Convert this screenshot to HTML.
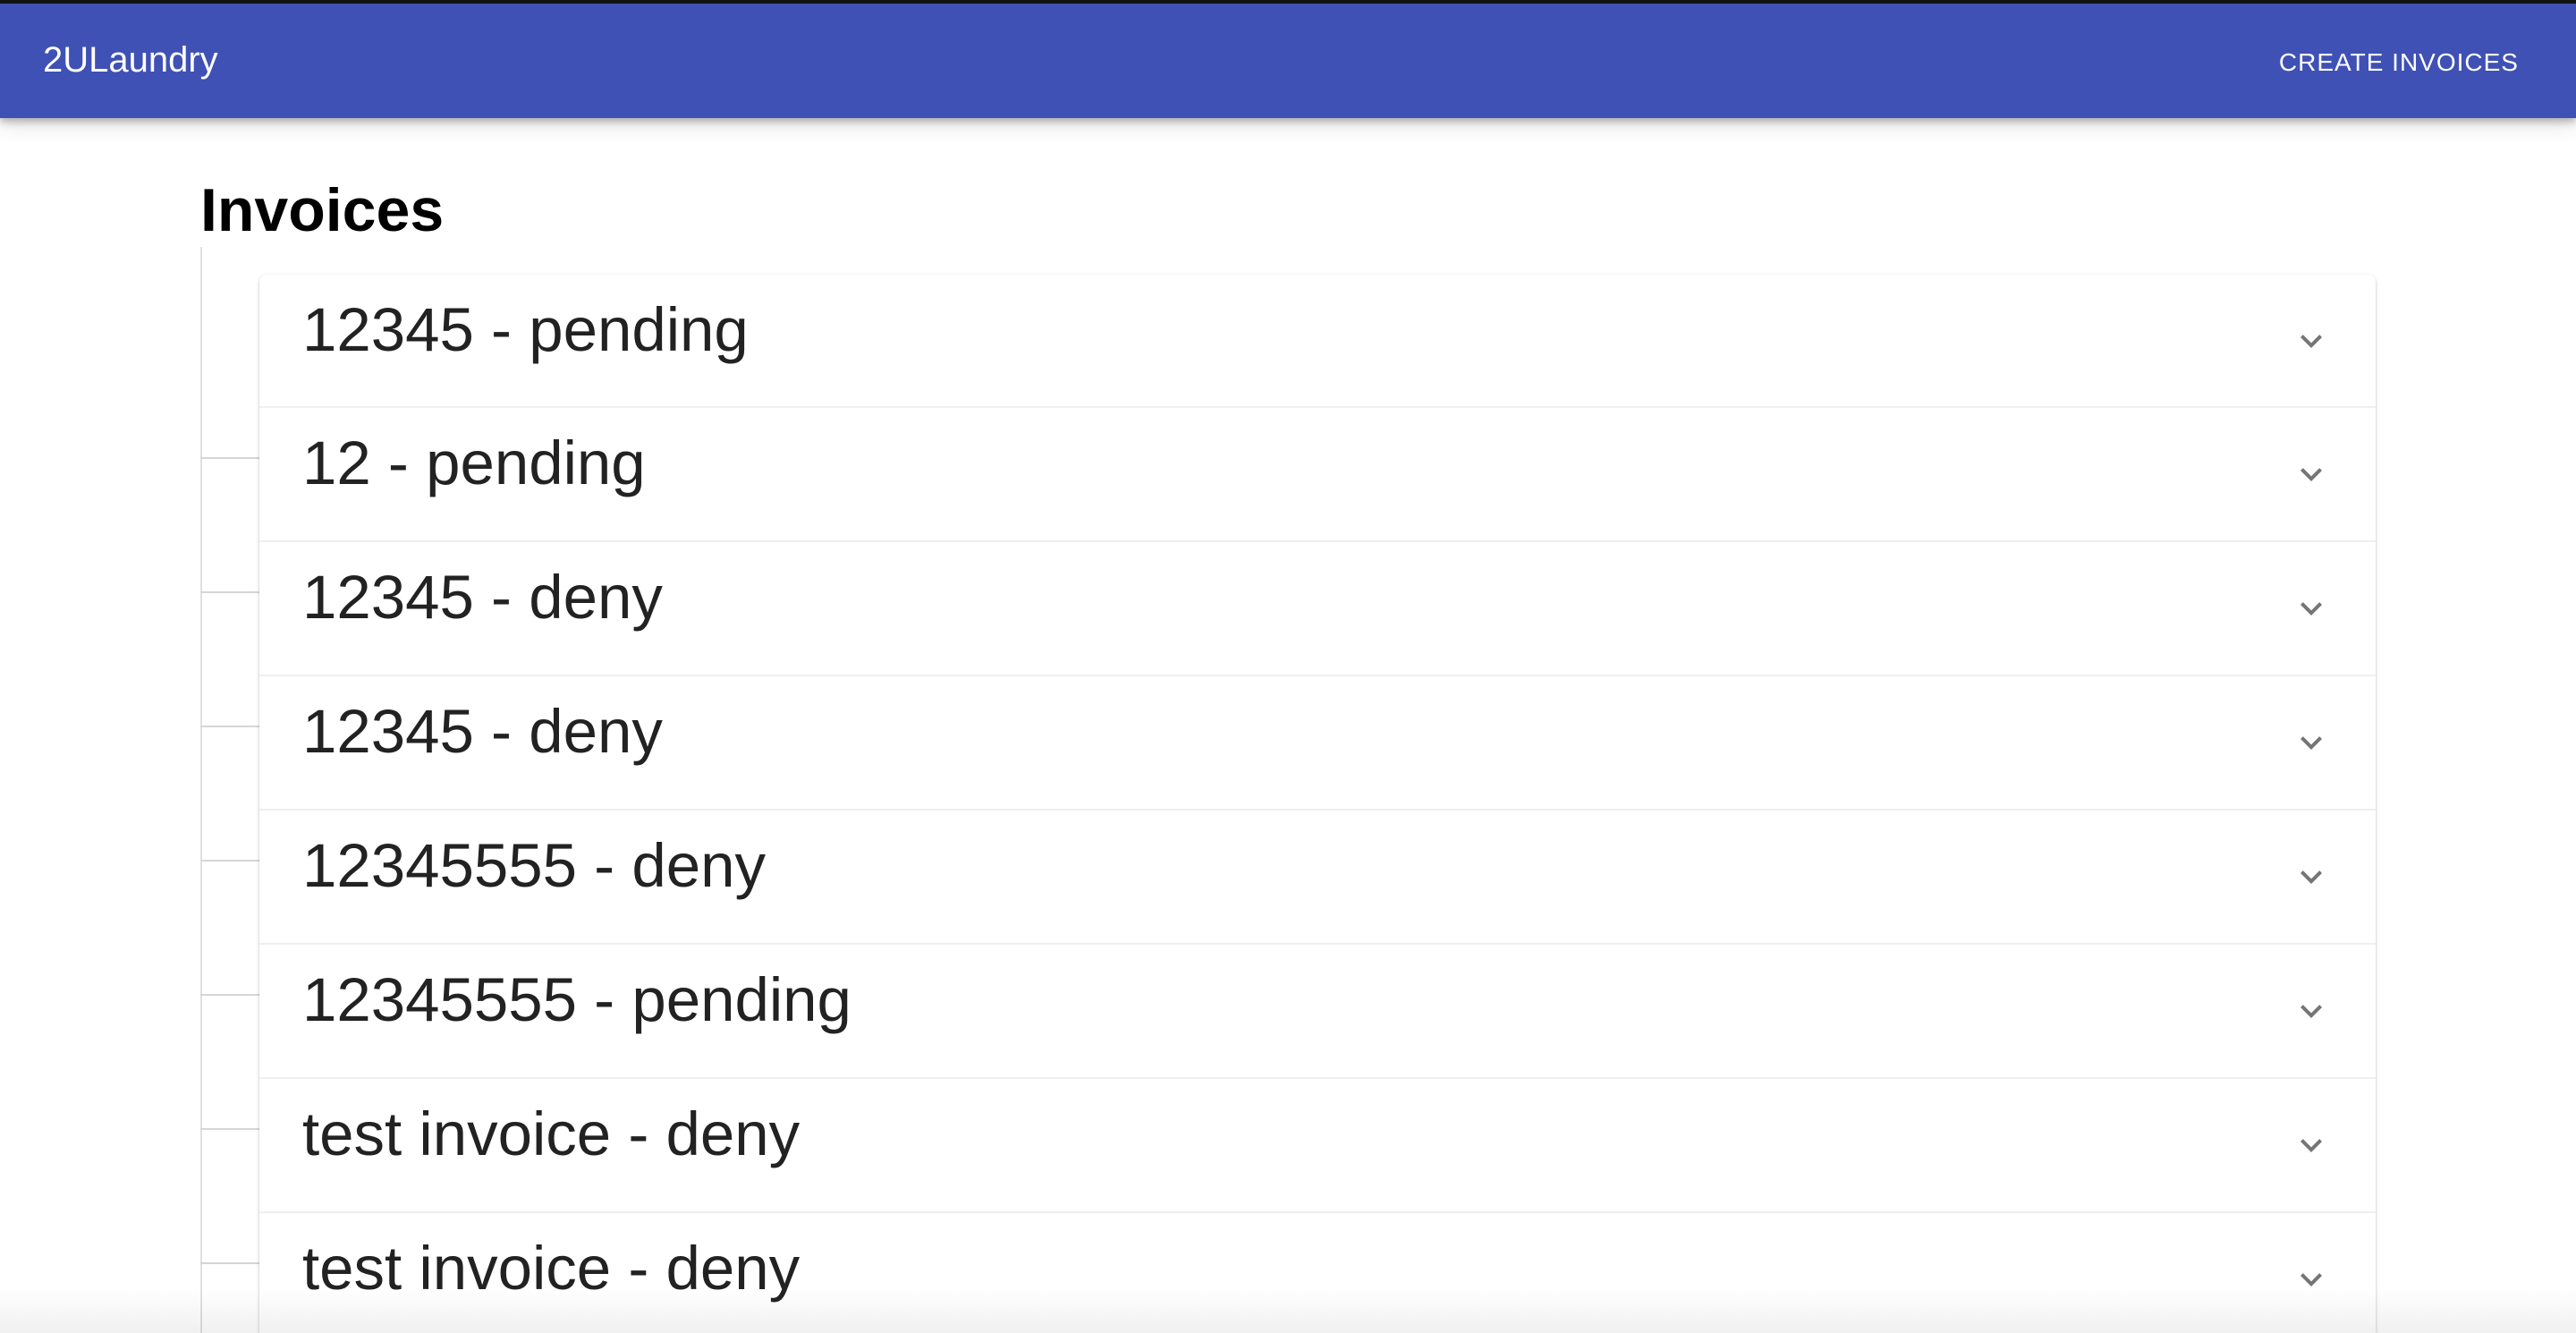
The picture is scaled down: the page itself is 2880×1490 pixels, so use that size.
<!DOCTYPE html>
<html style="width:2880px;height:1490px;overflow:hidden"><head><meta charset="utf-8"><style>
*{margin:0;padding:0;box-sizing:border-box}
body{width:2880px;height:1490px;overflow:hidden;background:#fff;font-family:"Liberation Sans",Arial,sans-serif;position:relative}
.top{position:absolute;left:0;top:0;width:2880px;height:4px;background:#141414}
.bar{position:absolute;left:0;top:4px;width:2880px;height:128px;background:#3f51b5;box-shadow:0 4px 8px rgba(0,0,0,.25),0 8px 20px rgba(0,0,0,.12);z-index:2}
.brand{position:absolute;left:48px;top:37px;color:#fff;font-size:40px;line-height:52px}
.btn{position:absolute;right:64px;top:48px;color:#fff;font-size:28px;letter-spacing:1px;line-height:36px}
h1{position:absolute;left:224px;top:190px;font-size:68px;font-weight:bold;color:#000;line-height:90px}
.vline{position:absolute;left:224px;top:276px;width:2px;height:1214px;background:#e0e0e0}
.tick{position:absolute;left:224px;width:66px;height:2px;background:#d6d6d6}
.card{position:absolute;left:290px;top:307px;width:2366px;height:1183px;overflow:hidden;background:#fff;border-radius:8px 8px 0 0;box-shadow:0 2px 3px rgba(0,0,0,.18),0 1px 6px rgba(0,0,0,.08)}
.row{position:absolute;left:0;width:2366px;height:150px;border-top:2px solid #efefef}
.row span{position:absolute;left:48px;top:22px;font-size:69px;color:#222;line-height:80px}
.row svg{position:absolute;left:2270px;top:50px}
.fade{position:absolute;left:0;top:1440px;width:2880px;height:50px;background:linear-gradient(rgba(0,0,0,0),rgba(0,0,0,.06));z-index:5}
</style></head><body>
<div class="top"></div>
<div class="bar"><div class="brand">2ULaundry</div><div class="btn">CREATE INVOICES</div></div>
<h1>Invoices</h1>
<div class="vline"></div>
<div class="tick" style="top:511px"></div>
<div class="tick" style="top:661px"></div>
<div class="tick" style="top:811px"></div>
<div class="tick" style="top:961px"></div>
<div class="tick" style="top:1111px"></div>
<div class="tick" style="top:1261px"></div>
<div class="tick" style="top:1411px"></div>
<div class="card">
<div class="row" style="top:0;border-top:none"><span style="top:22px">12345 - pending</span><svg width="48" height="48" viewBox="0 0 24 24"><path d="M7.41 8.59 12 13.17l4.59-4.58L18 10l-6 6-6-6z" fill="#757575"/></svg></div>
<div class="row" style="top:147px"><span>12 - pending</span><svg width="48" height="48" viewBox="0 0 24 24"><path d="M7.41 8.59 12 13.17l4.59-4.58L18 10l-6 6-6-6z" fill="#757575"/></svg></div>
<div class="row" style="top:297px"><span>12345 - deny</span><svg width="48" height="48" viewBox="0 0 24 24"><path d="M7.41 8.59 12 13.17l4.59-4.58L18 10l-6 6-6-6z" fill="#757575"/></svg></div>
<div class="row" style="top:447px"><span>12345 - deny</span><svg width="48" height="48" viewBox="0 0 24 24"><path d="M7.41 8.59 12 13.17l4.59-4.58L18 10l-6 6-6-6z" fill="#757575"/></svg></div>
<div class="row" style="top:597px"><span>12345555 - deny</span><svg width="48" height="48" viewBox="0 0 24 24"><path d="M7.41 8.59 12 13.17l4.59-4.58L18 10l-6 6-6-6z" fill="#757575"/></svg></div>
<div class="row" style="top:747px"><span>12345555 - pending</span><svg width="48" height="48" viewBox="0 0 24 24"><path d="M7.41 8.59 12 13.17l4.59-4.58L18 10l-6 6-6-6z" fill="#757575"/></svg></div>
<div class="row" style="top:897px"><span>test invoice - deny</span><svg width="48" height="48" viewBox="0 0 24 24"><path d="M7.41 8.59 12 13.17l4.59-4.58L18 10l-6 6-6-6z" fill="#757575"/></svg></div>
<div class="row" style="top:1047px"><span>test invoice - deny</span><svg width="48" height="48" viewBox="0 0 24 24"><path d="M7.41 8.59 12 13.17l4.59-4.58L18 10l-6 6-6-6z" fill="#757575"/></svg></div>
</div>
<div class="fade"></div>
</body></html>
